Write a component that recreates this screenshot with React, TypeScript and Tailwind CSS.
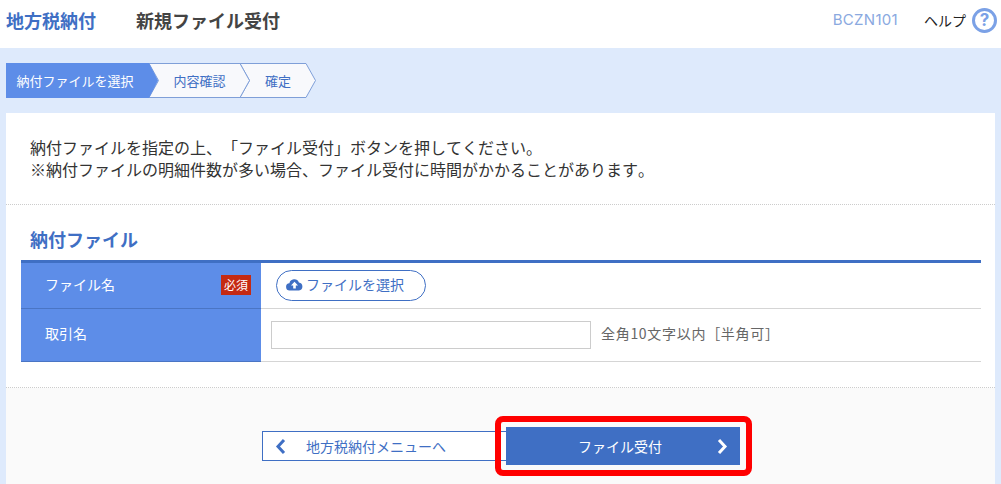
const FONT = "font-['Noto_Sans_CJK_JP','Inter',sans-serif] [text-spacing-trim:space-all] [font-kerning:none]";

function Step({ label, active, first, w, className }: { label: string; active?: boolean; first?: boolean; w: number; className: string }) {
  const tip = w - 10;
  const path = first
    ? `M0 0 H${tip} L${w - 1} 17.5 L${tip} 35 H0 Z`
    : `M0 .5 H${tip} L${w - 0.5} 17.5 L${tip} 34.5 H0 L9.5 17.5 Z`;
  return (
    <div className={`relative h-[35px] flex items-center text-[13px] ${active ? 'text-white' : 'text-[#3f6fc4]'} ${className}`}>
      <svg className="absolute inset-0" width={w} height="35" viewBox={`0 0 ${w} 35`}>
        <path d={path} fill={active ? '#5d8de8' : '#f8f9fc'} stroke={active ? 'none' : '#7f9fd8'} strokeWidth="1" />
      </svg>
      <span className="relative w-full text-center">{label}</span>
    </div>
  );
}

export default function App() {
  return (
    <div className={`relative w-[1001px] h-[484px] overflow-hidden bg-[#deeafc] ${FONT}`}>
      {/* Header */}
      <div className="h-[48px] bg-white flex items-center pl-[6px] pr-[4px] pb-[7px]">
        <h1 className="w-[130px] text-[18px] font-bold text-[#3f6fc4]">地方税納付</h1>
        <h2 className="text-[18px] font-bold text-[#444]">新規ファイル受付</h2>
        <span className="ml-auto font-['Inter'] text-[15px] tracking-[0.3px] text-[#8aa9df]">BCZN101</span>
        <span className="ml-[26px] text-[14px] text-[#222]">ヘルプ</span>
        <span className="ml-[6px] w-[25px] h-[25px] rounded-full border-[3px] border-[#7ba1e6] flex items-center justify-center font-['Inter'] text-[17px] font-bold text-[#7ba1e6]">?</span>
      </div>

      {/* Steps */}
      <div className="flex pl-[6px] pt-[15px]">
        <Step label="納付ファイルを選択" active first w={153} className="w-[153px] z-20 pr-[15px]" />
        <Step label="内容確認" w={101} className="w-[101px] -ml-[10px] z-10" />
        <Step label="確定" w={76} className="w-[76px] -ml-[10px]" />
      </div>

      {/* Card */}
      <div className="mx-[6px] mt-[15px] bg-white h-[371px] flex flex-col">
        <div className="h-[92px] px-[24px] pt-[23px] text-[16px] leading-[22px] text-[#333] border-b border-dotted border-[#ccc]">
          <p>納付ファイルを指定の上、「ファイル受付」ボタンを押してください。</p>
          <p>※納付ファイルの明細件数が多い場合、ファイル受付に時間がかかることがあります。</p>
        </div>

        <div className="h-[183px] pl-[15px] pr-[14px] border-b border-dotted border-[#ccc]">
          <h3 className="pl-[9px] pt-[22px] h-[55px] text-[18px] leading-[24px] font-bold text-[#3f6fc4]">納付ファイル</h3>
          <div className="border-t-[3px] border-[#3f6fc4]">
            <div className="flex h-[46px] border-b border-[#d5d5d5]">
              <div className="w-[240px] -mb-px border-b border-[#4a75c4] bg-[#5d8de8] flex items-center justify-between pl-[24px] pr-[10px] pb-[2px] text-[14px] text-white">
                <span>ファイル名</span>
                <span className="w-[30px] h-[20px] bg-[#c52a12] text-[12px] flex items-center justify-center">必須</span>
              </div>
              <div className="flex items-center pl-[15px]">
                <button className="h-[31px] w-[150px] rounded-full border border-[#3f6fc4] flex items-center pl-[9px] pb-[2px] gap-[3px] text-[14px] text-[#3f6fc4]">
                  <svg width="17" height="13" viewBox="0 0 17 13">
                    <path d="M4 12.5a3.6 3.6 0 0 1-.6-7.2A5 5 0 0 1 12.9 4.4 4.1 4.1 0 0 1 13 12.5Z" fill="#3f6fc4" />
                    <path d="M8.5 3.8 12 7.4H9.8v3H7.2v-3H5Z" fill="#fff" />
                  </svg>
                  ファイルを選択
                </button>
              </div>
            </div>
            <div className="flex h-[53px] border-b border-[#d5d5d5]">
              <div className="w-[240px] -mb-px border-b border-[#4a75c4] bg-[#5d8de8] flex items-center pl-[24px] pb-[3px] text-[14px] text-white">取引名</div>
              <div className="flex items-center pl-[10px] gap-[10px]">
                <input className="w-[320px] h-[28px] border border-[#ccc] bg-white" />
                <span className="text-[14px] tracking-[0.7px] text-[#666] pb-[3px]">全角10文字以内［半角可］</span>
              </div>
            </div>
          </div>
        </div>

        <div className="flex-1 bg-[#fafafa] flex items-start justify-center pt-[39px] pl-[1px]">
          <div className="flex items-center">
            <button className="relative w-[250px] h-[30px] -mr-[6px] border border-[#3f6fc4] bg-white flex items-center text-[14px] text-[#3f6fc4] pl-[43px]">
              <svg className="absolute left-[11px] top-[6px]" width="14" height="17" viewBox="0 0 14 17">
                <path d="M10 2 4 8.5 10 15" fill="none" stroke="#3f6fc4" strokeWidth="3" />
              </svg>
              地方税納付メニューへ
            </button>
            <button className="relative w-[234px] h-[38px] bg-[#3f6fc4] flex items-center justify-center pr-[6px] text-[14px] text-white">
              ファイル受付
              <svg className="absolute right-[11px] top-[11px]" width="14" height="17" viewBox="0 0 14 17">
                <path d="M4 2 10 8.5 4 15" fill="none" stroke="#fff" strokeWidth="3" />
              </svg>
            </button>
          </div>
        </div>
      </div>

      {/* Red highlight callout */}
      <div className="absolute left-[495px] top-[416px] w-[257px] h-[60px] rounded-[8px] border-[6px] border-[#f00]" />
    </div>
  );
}
